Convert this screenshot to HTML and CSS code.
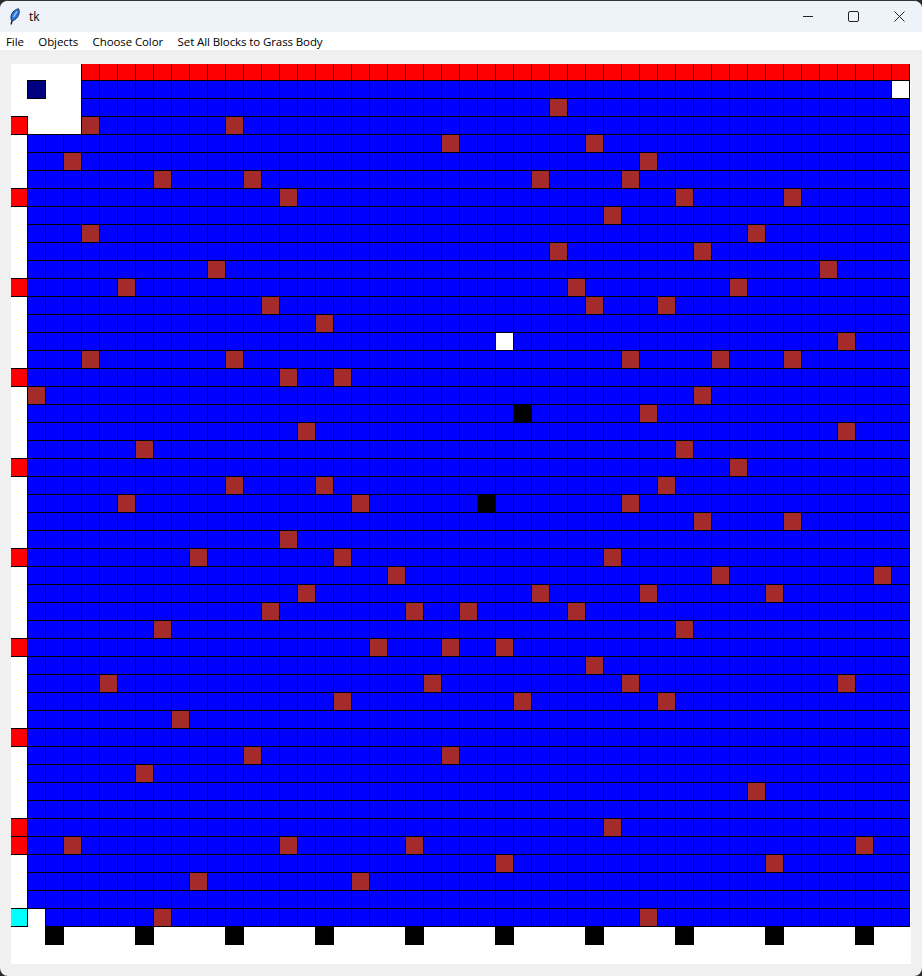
FILE: index.html
```html
<!DOCTYPE html>
<html lang="en">
<head>
    <meta charset="UTF-8">
    <meta name="viewport" content="width=device-width, initial-scale=1.0">
    <title>tk</title>
    <link rel="stylesheet" href="styles.css">
</head>
<body>
    <div class="window">
        <div class="titlebar">
            <svg class="app-icon" width="16" height="18" viewBox="0 0 16 18">
                <path d="M4 16.5 L6 10" stroke="#1a1a1a" stroke-width="1.3" fill="none"/>
                <path d="M5 13 C2 8.5 5.5 2 11.5 0.7 C13.5 4 11.5 11 5 13 Z" fill="#2a78dc" stroke="#17375f" stroke-width="1"/>
                <path d="M6.5 9 L10 3.5" stroke="#a9d2ff" stroke-width="1.2" fill="none"/>
            </svg>
            <span class="title">tk</span>
            <div class="win-buttons">
                <div class="win-btn">
                    <svg width="12" height="11" viewBox="0 0 12 11"><path d="M2 5.5 H12" stroke="#222" stroke-width="1"/></svg>
                </div>
                <div class="win-btn">
                    <svg width="12" height="11" viewBox="0 0 12 11"><rect x="1.5" y="0.5" width="10" height="10" rx="1.5" fill="none" stroke="#222" stroke-width="1"/></svg>
                </div>
                <div class="win-btn">
                    <svg width="12" height="11" viewBox="0 0 12 11"><path d="M1.5 0.5 L11.5 10.5 M11.5 0.5 L1.5 10.5" stroke="#222" stroke-width="1"/></svg>
                </div>
            </div>
        </div>
        <div class="menubar">
            <span class="menu-item">File</span>
            <span class="menu-item">Objects</span>
            <span class="menu-item">Choose Color</span>
            <span class="menu-item">Set All Blocks to Grass Body</span>
        </div>
        <div class="content">
            <div class="board">
                <div id="grid" class="grid"></div>
            </div>
        </div>
    </div>
    <script src="script.js"></script>
</body>
</html>
```

FILE: styles.css
```css
html, body {
    margin: 0;
    padding: 0;
    background-color: #2b2b2b;
}
.window {
    width: 922px;
    height: 976px;
    box-sizing: border-box;
    border-top: 1px solid #333;
    border-radius: 8px;
    overflow: hidden;
    display: flex;
    flex-direction: column;
    background-color: #f0f0f0;
    font-family: "Open Sans", "Noto Sans", sans-serif;
    color: #000;
}
.titlebar {
    height: 31px;
    display: flex;
    align-items: center;
    background-color: #eef2f9;
    font-size: 12px;
}
.app-icon {
    margin-left: 7px;
}
.title {
    margin-left: 6px;
    flex: 1;
}
.win-buttons {
    display: flex;
}
.win-btn {
    width: 46px;
    height: 31px;
    display: flex;
    align-items: center;
    justify-content: center;
}
.menubar {
    height: 18px;
    display: flex;
    align-items: center;
    padding-left: 6px;
    gap: 14.5px;
    background-color: #fff;
    font-size: 11.5px;
    letter-spacing: -0.1px;
}
.content {
    flex: 1;
    padding: 14px 0 0 11px;
}
.board {
    width: 900px;
    height: 900px;
    overflow: hidden;
    background-color: #fff;
}
.grid {
    display: grid;
    grid-template-columns: repeat(50, 18px);
    grid-auto-rows: 18px;
    margin: -2px 0 0 -2px;
}
.cell {
    width: 19px;
    height: 19px;
    box-sizing: border-box;
    border: 1px solid #000;
}
.empty {
    border: none;
}
.water {
    background-color: #00f;
}
.brick {
    background-color: #a52a2a;
}
.lava {
    background-color: #f00;
}
.snow {
    background-color: #fff;
}
.coal {
    background-color: #000;
}
.player {
    background-color: #000080;
}
.spawn {
    background-color: #0ff;
}
```

FILE: script.js
```js
document.addEventListener('DOMContentLoaded', function() {
    const COLS = 50;
    const ROWS = 49;

    // brown blocks, row number -> columns
    const bricks = {
        2: [30], 3: [4, 12], 4: [24, 32], 5: [3, 35], 6: [8, 13, 29, 34],
        7: [15, 37, 43], 8: [33], 9: [4, 41], 10: [30, 38], 11: [11, 45],
        12: [6, 31, 40], 13: [14, 32, 36], 14: [17], 15: [46],
        16: [4, 12, 34, 39, 43], 17: [15, 18], 18: [1, 38], 19: [35],
        20: [16, 46], 21: [7, 37], 22: [40], 23: [12, 17, 36],
        24: [6, 19, 34], 25: [38, 43], 26: [15], 27: [10, 18, 33],
        28: [21, 39, 48], 29: [16, 29, 35, 42], 30: [14, 22, 25, 31],
        31: [8, 37], 32: [20, 24, 27], 33: [32], 34: [5, 23, 34, 46],
        35: [18, 28, 36], 36: [9], 38: [13, 24], 39: [7], 40: [41],
        42: [33], 43: [3, 15, 22, 47], 44: [27, 42], 45: [10, 19],
        47: [8, 35]
    };
    const leftRed = [3, 7, 12, 17, 22, 27, 32, 37, 42, 43];

    function cellType(row, col) {
        if (row === 48) {
            return (col - 2) % 5 === 0 && col >= 2 ? 'coal' : 'empty';
        }
        if (row === 0) return col < 4 ? 'empty' : 'lava';
        if (row === 1 && col === 1) return 'player';
        if (row === 1 && col === 49) return 'snow';
        if (row === 15 && col === 27) return 'snow';
        if (row === 19 && col === 28) return 'coal';
        if (row === 24 && col === 26) return 'coal';
        if (row === 47 && col === 0) return 'spawn';
        if (row === 47 && col === 1) return 'empty';
        if (col === 0) return leftRed.includes(row) ? 'lava' : 'empty';
        if (row < 4 && col < 4) return 'empty';
        if (bricks[row] && bricks[row].includes(col)) return 'brick';
        return 'water';
    }

    const grid = document.getElementById('grid');
    for (let row = 0; row < ROWS; row++) {
        for (let col = 0; col < COLS; col++) {
            const cell = document.createElement('div');
            cell.className = 'cell ' + cellType(row, col);
            grid.appendChild(cell);
        }
    }
});
```
